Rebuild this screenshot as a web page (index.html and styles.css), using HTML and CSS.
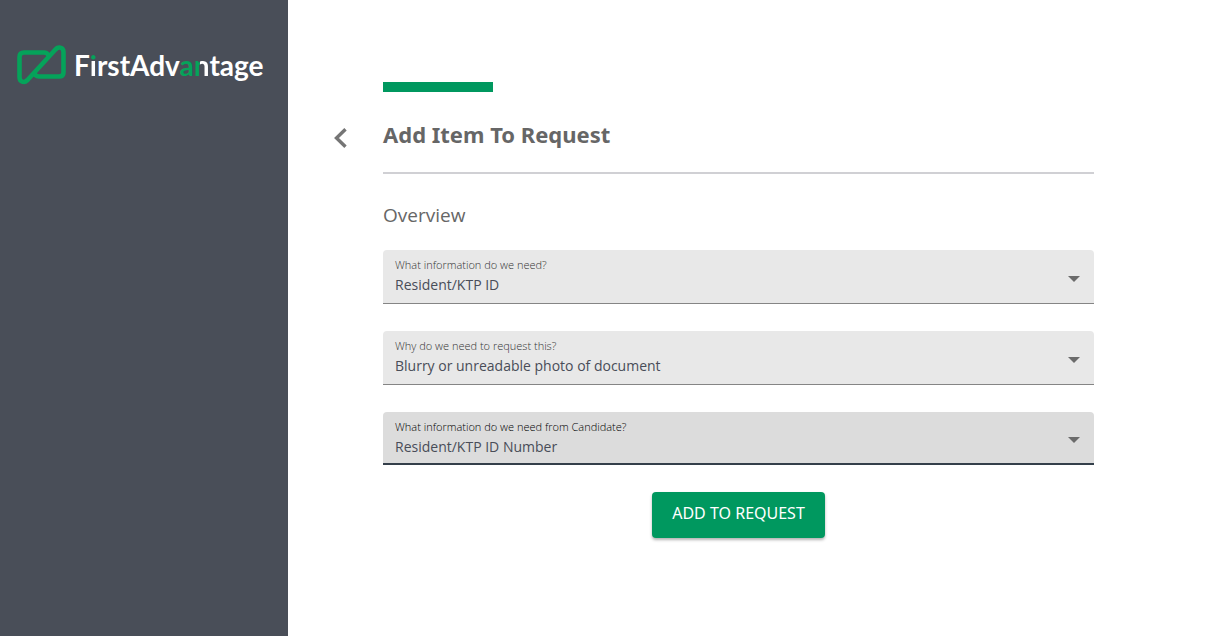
FILE: index.html
```html
<!DOCTYPE html>
<html lang="en">
<head>
<meta charset="utf-8">
<meta name="viewport" content="width=device-width, initial-scale=1">
<title>Add Item To Request</title>
<link rel="stylesheet" href="styles.css">
</head>
<body>
<div class="app">
  <aside class="sidebar">
    <div class="brand">
      <svg class="brand-mark" width="50" height="40" viewBox="0 0 50 40" fill="none" stroke="#05a35a" stroke-linejoin="round" stroke-linecap="round" aria-hidden="true">
        <path stroke-width="4.6" d="M32 10 C32 8.500 30 7.500 28 7.500 H8 Q3.500 7.500 3.500 12 V32 C3.500 37 8 38.500 11.500 35 L39 5 C42 1 47.500 2 47.500 7 V27.500 Q47.500 31.500 43 31.500 H23 C20 31.500 18.500 30 19 27.500"/>
      </svg>
      <span class="brand-name">F<span class="brand-i">i</span>rstAdv<span class="brand-accent">a</span><span class="brand-n">n</span>tage</span>
    </div>
  </aside>
  <main class="main">
    <header class="page-header">
      <button class="back" type="button" aria-label="Back">
        <svg width="14" height="20" viewBox="0 0 14 20" fill="none" stroke="#757575" stroke-width="3.4" aria-hidden="true"><path d="M12.500 1.300 L3.500 10 L12.500 18.700"/></svg>
      </button>
      <h1 class="title">Add Item To Request</h1>
    </header>
    <form class="form">
      <h2 class="section-title">Overview</h2>
      <div class="field">
        <label class="field-label" for="info">What information do we need?</label>
        <select class="field-select" id="info"><option>Resident/KTP ID</option></select>
        <svg class="field-arrow" width="12" height="6" viewBox="0 0 12 6" aria-hidden="true"><path d="M0 0H12L6 6Z" fill="#6b6b6b"/></svg>
      </div>
      <div class="field">
        <label class="field-label" for="reason">Why do we need to request this?</label>
        <select class="field-select" id="reason"><option>Blurry or unreadable photo of document</option></select>
        <svg class="field-arrow" width="12" height="6" viewBox="0 0 12 6" aria-hidden="true"><path d="M0 0H12L6 6Z" fill="#6b6b6b"/></svg>
      </div>
      <div class="field field-active">
        <label class="field-label" for="candidate">What information do we need from Candidate?</label>
        <select class="field-select" id="candidate"><option>Resident/KTP ID Number</option></select>
        <svg class="field-arrow" width="12" height="6" viewBox="0 0 12 6" aria-hidden="true"><path d="M0 0H12L6 6Z" fill="#6b6b6b"/></svg>
      </div>
      <button class="submit" type="button">ADD TO REQUEST</button>
    </form>
  </main>
</div>
</body>
</html>
```
FILE: styles.css
```css
* {
  box-sizing: border-box;
}

body {
  margin: 0;
  background: #fff;
  color: #494d58;
  font-family: "Open Sans", "Noto Sans", sans-serif;
}

.app {
  display: flex;
  min-height: 100vh;
}

.sidebar {
  flex: 0 0 288px;
  padding: 44px 16px;
  background: #494e58;
}

.brand {
  display: flex;
  align-items: center;
  gap: 8px;
}

.brand-mark {
  flex: none;
}

.brand-name {
  color: #fff;
  font-family: Lato, sans-serif;
  font-size: 28px;
  font-weight: 700;
  line-height: 42px;
}

.brand-i {
  background: linear-gradient(#05a35a 13px, #fff 13px);
  background-clip: text;
  color: transparent;
}

.brand-accent {
  color: #05a35a;
}

.brand-n {
  background: linear-gradient(90deg, #05a35a 6px, #fff 6px);
  background-clip: text;
  color: transparent;
}

.main {
  flex: 1;
  min-width: 0;
  padding: 82px 111px 40px 95px;
}

.page-header {
  position: relative;
  border-top: 10px solid transparent;
  border-bottom: 2px solid #d0d0d4;
  padding: 25px 0 21px;
}

.page-header::before {
  content: "";
  position: absolute;
  top: -10px;
  left: 0;
  width: 110px;
  height: 10px;
  background: #00985f;
}

.back {
  position: absolute;
  left: -56px;
  top: 30px;
  display: flex;
  padding: 6px;
  border: 0;
  background: none;
  cursor: pointer;
}

.title {
  margin: 0;
  color: #666;
  font-family: "Noto Sans", sans-serif;
  font-size: 22px;
  font-weight: 700;
  line-height: 34px;
}

.form {
  display: flex;
  flex-direction: column;
}

.section-title {
  margin: 27px 0 21px;
  color: #666;
  font-size: 19px;
  font-weight: 400;
  line-height: 28px;
}

.field {
  position: relative;
  margin-bottom: 27px;
}

.field-label {
  position: absolute;
  top: 7px;
  left: 12px;
  color: #333;
  font-size: 11px;
  font-weight: 300;
  line-height: 16px;
  pointer-events: none;
}

.field-select {
  display: block;
  width: 100%;
  height: 54px;
  padding: 16px 40px 0 12px;
  border: 0;
  border-bottom: 1px solid #858585;
  border-radius: 4px 4px 0 0;
  outline: 0;
  appearance: none;
  background: #e8e8e8;
  color: #494d58;
  font: inherit;
  font-size: 14px;
}

.field-arrow {
  position: absolute;
  top: 26px;
  right: 14px;
  pointer-events: none;
}

.field-active .field-label {
  color: #000;
}

.field-active .field-select {
  height: 53px;
  padding-top: 17px;
  border-bottom: 2px solid #343f4a;
  background: #dcdcdc;
}

.field-active .field-arrow {
  top: 25px;
}

.submit {
  align-self: center;
  padding: 9px 20px 13px;
  border: 0;
  border-radius: 4px;
  background: #00985f;
  box-shadow: 0 2px 3px rgba(0, 0, 0, 0.3);
  color: #fff;
  font-family: "Noto Sans", sans-serif;
  font-size: 16px;
  line-height: 24px;
  cursor: pointer;
}
```
